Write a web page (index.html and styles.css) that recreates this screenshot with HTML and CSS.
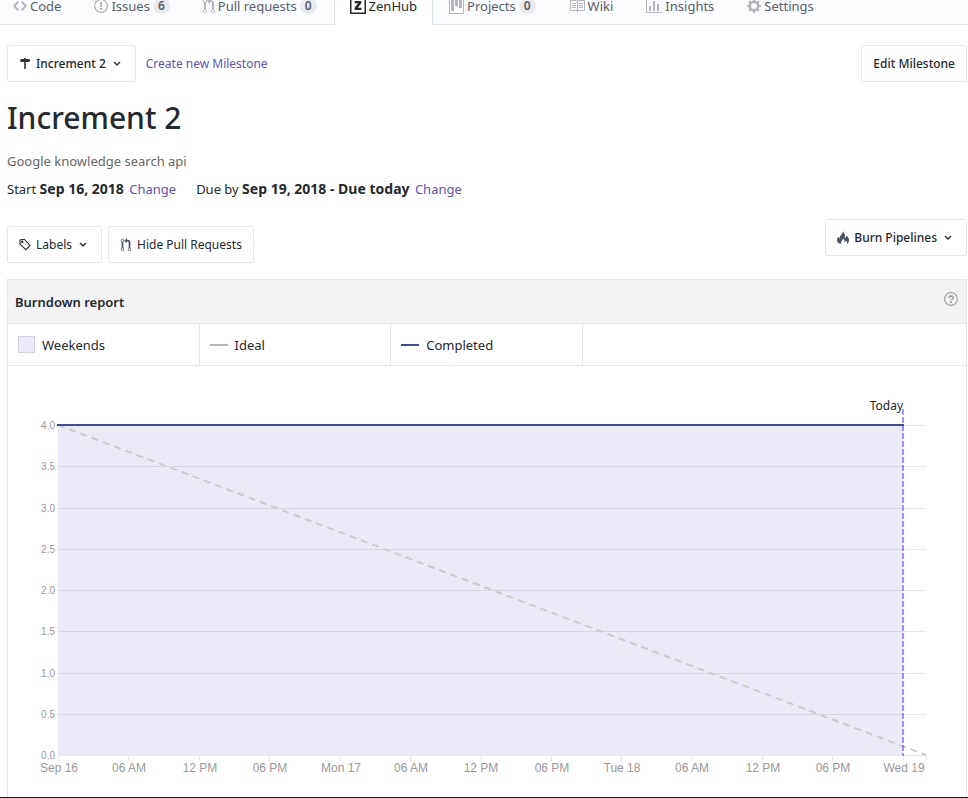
FILE: index.html
```html
<!DOCTYPE html>
<html lang="en">
<head>
<meta charset="utf-8">
<meta name="viewport" content="width=device-width, initial-scale=1">
<title>Increment 2</title>
<link rel="stylesheet" href="styles.css">
</head>
<body>
<nav class="tabs" aria-label="Repository">
  <a class="tab" href="#code"><svg class="icon" width="14" height="16" viewBox="0 0 14 16"><path d="M9.5 3L8 4.500 11.500 8 8 11.500 9.500 13 14 8 9.500 3zm-5 0L0 8l4.500 5L6 11.500 2.500 8 6 4.500 4.500 3z"/></svg>Code</a>
  <a class="tab" href="#issues"><svg class="icon" width="14" height="16" viewBox="0 0 14 16"><path d="M7 2.300c3.140 0 5.700 2.560 5.700 5.700s-2.560 5.700-5.700 5.700A5.710 5.710 0 0 1 1.300 8c0-3.140 2.560-5.700 5.700-5.700zM7 1C3.140 1 0 4.140 0 8s3.140 7 7 7 7-3.140 7-7-3.140-7-7-7zm1 3H6v5h2V4zm0 6H6v2h2v-2z"/></svg>Issues <span class="count">6</span></a>
  <a class="tab" href="#pulls"><svg class="icon" width="12" height="16" viewBox="0 0 12 16"><path d="M11 11.280V5c-.03-.78-.34-1.470-.94-2.060C9.460 2.350 8.780 2.030 8 2H7V0L4 3l3 3V4h1c.27.020.480.110.690.310.210.200.300.420.310.690v6.280A1.993 1.993 0 0 0 10 15a1.993 1.993 0 0 0 1-3.720zm-1 2.920c-.66 0-1.200-.55-1.200-1.200 0-.65.550-1.200 1.200-1.200.650 0 1.200.550 1.200 1.200 0 .650-.550 1.200-1.200 1.200zM4 3c0-1.110-.890-2-2-2a1.993 1.993 0 0 0-1 3.720v6.560A1.993 1.993 0 0 0 2 15a1.993 1.993 0 0 0 1-3.720V4.720c.590-.340 1-.980 1-1.720zm-.8 10c0 .660-.550 1.200-1.200 1.200-.650 0-1.200-.550-1.200-1.200 0-.650.550-1.200 1.200-1.200.650 0 1.200.550 1.200 1.200zM2 4.200C1.340 4.200.8 3.650.8 3c0-.65.550-1.200 1.200-1.200.650 0 1.200.550 1.200 1.200 0 .650-.550 1.200-1.200 1.200z"/></svg>Pull requests <span class="count">0</span></a>
  <a class="tab tab-active" href="#zenhub" aria-current="page"><svg class="icon" width="16" height="16" viewBox="0 0 16 16"><path d="M0 0h16v16H0zM1.500 1.500v13h13v-13z" fill-rule="evenodd"/><path d="M4.700 3h6.600v2.200L7.800 9.700h3.600V12H4.600V9.800l3.500-4.500H4.700z"/></svg>ZenHub</a>
  <a class="tab" href="#projects"><svg class="icon" width="15" height="16" viewBox="0 0 15 16"><path fill-rule="evenodd" d="M10 10h3V2h-3v8zm-4-2h3V2H6v6zm-4 5h3V2H2v11zm-1 2h13V1H1v14zM14 0H1a1 1 0 0 0-1 1v14a1 1 0 0 0 1 1h13a1 1 0 0 0 1-1V1a1 1 0 0 0-1-1z"/></svg>Projects <span class="count">0</span></a>
  <a class="tab" href="#wiki"><svg class="icon" width="16" height="16" viewBox="0 0 16 16"><path fill-rule="evenodd" d="M3 5h4v1H3V5zm0 3h4V7H3v1zm0 2h4V9H3v1zm11-5h-4v1h4V5zm0 2h-4v1h4V7zm0 2h-4v1h4V9zm2-6v9c0 .550-.450 1-1 1H9.500l-1 1-1-1H2c-.550 0-1-.450-1-1V3c0-.550.450-1 1-1h5.500l1 1 1-1H15c.550 0 1 .450 1 1zm-8 .5L7.500 3H2v9h6V3.500zm7-.5H9.500l-.5.500V12h6V3z"/></svg>Wiki</a>
  <a class="tab" href="#insights"><svg class="icon" width="16" height="16" viewBox="0 0 16 16"><path d="M16 14v1H0V0h1v14h15zM5 13H3V8h2v5zm4 0H7V3h2v10zm4 0h-2V6h2v7z"/></svg>Insights</a>
  <a class="tab" href="#settings"><svg class="icon" width="14" height="16" viewBox="0 0 14 16"><path fill-rule="evenodd" d="M14 8.770v-1.600l-1.940-.640-.450-1.090.880-1.840-1.130-1.130-1.810.910-1.090-.450-.690-1.920h-1.600l-.630 1.940-1.110.450-1.840-.880-1.130 1.130.910 1.810-.450 1.090L0 7.230v1.590l1.940.640.450 1.090-.880 1.840 1.130 1.130 1.810-.910 1.090.450.690 1.920h1.590l.630-1.940 1.110-.450 1.840.880 1.130-1.130-.920-1.810.470-1.090L14 8.750v.020zM7 11c-1.660 0-3-1.340-3-3s1.340-3 3-3 3 1.340 3 3-1.340 3-3 3z"/></svg>Settings</a>
</nav>

<main class="page">
  <div class="bar">
    <button class="btn btn-strong" type="button"><svg class="btn-icon" width="12" height="14" viewBox="0 0 12 14"><path d="M5.200 1h1.600v1H10l1.500 1.300L10 5H6.800v7H5.200V5H2L.8 3.500 2 2h3.200z"/></svg>Increment 2<svg class="chevron" width="8" height="6" viewBox="0 0 8 6"><path d="M1 1l3 3 3-3"/></svg></button>
    <a class="link action" href="#new">Create new Milestone</a>
    <button class="btn btn-strong push" type="button">Edit Milestone</button>
  </div>

  <h1 class="title">Increment 2</h1>
  <p class="summary">Google knowledge search api</p>
  <div class="dates">
    <span>Start <b>Sep 16, 2018</b> <a class="link change" href="#start">Change</a></span>
    <span>Due by <b>Sep 19, 2018 - Due today</b> <a class="link change" href="#due">Change</a></span>
  </div>

  <div class="filters">
    <div class="group">
      <button class="btn" type="button"><svg class="btn-icon outline" width="12" height="14" viewBox="0 0 13 14"><path d="M1 2.500Q1 1 2.500 1H6l6 6.500L7.500 12 1 6z"/><circle cx="3.500" cy="3.500" r=".7"/></svg>Labels<svg class="chevron" width="8" height="6" viewBox="0 0 8 6"><path d="M1 1l3 3 3-3"/></svg></button>
      <button class="btn" type="button"><svg class="btn-icon slate" width="12" height="14" viewBox="0 0 12 16"><path d="M11 11.280V5c-.03-.78-.34-1.470-.94-2.060C9.460 2.350 8.780 2.030 8 2H7V0L4 3l3 3V4h1c.27.020.480.110.690.310.210.200.300.420.310.690v6.280A1.993 1.993 0 0 0 10 15a1.993 1.993 0 0 0 1-3.720zm-1 2.920c-.66 0-1.200-.55-1.200-1.200 0-.65.550-1.200 1.200-1.200.650 0 1.200.550 1.200 1.200 0 .650-.550 1.200-1.200 1.200zM4 3c0-1.110-.890-2-2-2a1.993 1.993 0 0 0-1 3.720v6.560A1.993 1.993 0 0 0 2 15a1.993 1.993 0 0 0 1-3.720V4.720c.590-.340 1-.980 1-1.720zm-.8 10c0 .660-.550 1.200-1.200 1.200-.650 0-1.200-.550-1.200-1.200 0-.650.550-1.200 1.200-1.200.650 0 1.200.550 1.200 1.200zM2 4.200C1.340 4.200.8 3.650.8 3c0-.65.550-1.200 1.200-1.200.650 0 1.200.550 1.200 1.200 0 .650-.550 1.200-1.200 1.200z"/></svg>Hide Pull Requests</button>
    </div>
    <button class="btn btn-strong" type="button"><svg class="btn-icon slate" width="12" height="14" viewBox="0 0 12 14"><path d="M6 0c.4 2 2 3 2 5 0 1-.3 1.600-.6 2.100C9 6.800 9.500 5.500 9.600 4.500 11.200 6 12 7.500 12 9.200c0 1.800-.8 3-2 3.800.4-1.500-.1-2.600-1.200-3.500-.2 1-.7 1.500-1.300 1.700.3-1.700-.4-3-1.500-3.700.1 1.500-2 2.500-2 4 0 .6.1 1 .4 1.500C1.500 12.800 0 11.500 0 9.300c0-1.500.7-2.600 1.700-3.600 0 1 .2 1.700.8 2.100C2.400 4.500 5.700 3.500 6 0z"/></svg>Burn Pipelines<svg class="chevron" width="8" height="6" viewBox="0 0 8 6"><path d="M1 1l3 3 3-3"/></svg></button>
  </div>

  <section class="report" aria-labelledby="report-title">
    <header class="report-head">
      <h2 id="report-title" class="report-title">Burndown report</h2>
      <button class="help" type="button" aria-label="Help"><svg width="14" height="16" viewBox="0 0 14 16"><path d="M6 10h2v2H6v-2zm4-3.500C10 8.640 8 9 8 9H6c0-.550.450-1 1-1h.5c.280 0 .5-.220.500-.5v-1c0-.280-.220-.5-.5-.5h-1c-.280 0-.5.220-.5.500V7H4c0-1.500 1.500-3 3-3s3 1 3 2.500zM7 2.300c3.140 0 5.700 2.560 5.700 5.700s-2.560 5.700-5.700 5.700A5.710 5.710 0 0 1 1.300 8c0-3.140 2.560-5.700 5.700-5.700zM7 1C3.140 1 0 4.140 0 8s3.140 7 7 7 7-3.140 7-7-3.140-7-7-7z"/></svg></button>
    </header>
    <ul class="legend">
      <li><span class="swatch"></span>Weekends</li>
      <li><span class="stroke stroke-ideal"></span>Ideal</li>
      <li><span class="stroke stroke-done"></span>Completed</li>
    </ul>
    <svg class="chart" viewBox="0 0 958 431" role="img" aria-label="Burndown chart">
      <path class="grid" d="M50 59.500H918M50 100.500H918M50 142.500H918M50 183.500H918M50 224.500H918M50 265.500H918M50 307.500H918M50 348.500H918M50 389.500H918"/>
      <path class="grid" d="M50.500 389v6M120.500 389v6M191.500 389v6M261.500 389v6M332.500 389v6M402.500 389v6M473.500 389v6M543.500 389v6M613.500 389v6M684.500 389v6M754.500 389v6M824.500 389v6M895.500 389v6M918.500 389v5"/>
      <rect class="weekend" x="50" y="60" width="845" height="329"/>
      <path class="ideal" d="M50 59L918 389"/>
      <path class="done" d="M49 59H896"/>
      <path class="today" d="M895 43V390"/>
      <text class="today-label" x="895" y="44">Today</text>
      <g class="y-axis">
        <text x="47" y="63">4.0</text><text x="47" y="104">3.5</text><text x="47" y="146">3.0</text><text x="47" y="187">2.5</text><text x="47" y="228">2.0</text><text x="47" y="269">1.5</text><text x="47" y="311">1.0</text><text x="47" y="352">0.5</text><text x="47" y="393">0.0</text>
      </g>
      <g class="x-axis">
        <text x="51" y="406">Sep 16</text><text x="121" y="406">06 AM</text><text x="192" y="406">12 PM</text><text x="262" y="406">06 PM</text><text x="333" y="406">Mon 17</text><text x="403" y="406">06 AM</text><text x="473" y="406">12 PM</text><text x="544" y="406">06 PM</text><text x="614" y="406">Tue 18</text><text x="684" y="406">06 AM</text><text x="755" y="406">12 PM</text><text x="825" y="406">06 PM</text><text x="896" y="406">Wed 19</text>
      </g>
    </svg>
  </section>
</main>
</body>
</html>
```
FILE: styles.css
```css
* { box-sizing: border-box; }

body {
  margin: 0;
  background: #fff;
  color: #24292e;
  font: 13px/20px "Noto Sans", "Open Sans", sans-serif;
  border-bottom: 1px solid #111;
  overflow-x: hidden;
}

a { color: inherit; text-decoration: none; }

.tabs {
  display: flex;
  height: 25px;
  align-items: flex-end;
  overflow: hidden;
  background: #fafbfc;
  box-shadow: inset 0 -1px #e1e4e8;
}

.tab {
  display: flex;
  flex: none;
  align-items: center;
  gap: 3px;
  height: 38px;
  padding: 4px 16px;
  margin-right: 1px;
  color: #586069;
  white-space: nowrap;
}
.tab:first-child { padding-left: 13px; }

.tab-active {
  margin: 0;
  padding: 4px 15px;
  background: #fff;
  border: solid #e1e4e8;
  border-width: 0 1px;
  color: #24292e;
}

.icon { flex: none; fill: #b4b6b9; }
.tab-active .icon { fill: #24292e; }

.count {
  padding: 0 5px;
  border-radius: 10px;
  background: #e9eaec;
  font-size: 12px;
  line-height: 16px;
  font-weight: 600;
}

.page { padding: 20px 1px 0 7px; }

.bar { display: flex; align-items: center; gap: 10px; }
.push { margin-left: auto; }

.btn, .action { font: 12px/20px "Noto Sans", "Open Sans", sans-serif; }
.btn {
  display: inline-flex;
  align-items: center;
  height: 37px;
  padding: 0 11px;
  border: 1px solid #e8e8e8;
  border-radius: 2px;
  background: #fff;
  color: #24292e;
  white-space: nowrap;
}
.btn-strong { font-weight: 500; }
.btn-icon { margin-right: 5px; fill: #333; }
.slate { fill: #4a5264; }
.outline { fill: none; stroke: #24292e; stroke-width: 1.2; }
.chevron { margin: 0 3px 0 7px; fill: none; stroke: #333; stroke-width: 1.5; }

.link { color: #5e53b5; }

.title {
  margin: 16px 0 0;
  font-size: 30px;
  line-height: 40px;
  font-weight: 500;
}
.summary { margin: 13px 0 0; color: #666; }
.dates { display: flex; gap: 20px; margin-top: 8px; }
.dates b { font-size: 14px; }
.change { margin-left: 2px; }

.filters {
  display: flex;
  align-items: flex-start;
  justify-content: space-between;
  margin-top: 20px;
}
.group { display: flex; gap: 6px; padding-top: 7px; }

.report {
  margin-top: 16px;
  border: 1px solid #e8e8e8;
  border-bottom: 0;
}
.report-head {
  display: flex;
  align-items: center;
  justify-content: space-between;
  height: 44px;
  padding: 0 8px 0 7px;
  background: #f3f3f3;
  border-bottom: 1px solid #e8e8e8;
}
.report-title { margin: 0; font-size: 13px; font-weight: 600; }
.help { display: flex; padding: 0 0 6px; border: 0; background: none; }
.help svg { fill: #a8a8a8; }

.legend {
  display: flex;
  margin: 0;
  padding: 0;
  list-style: none;
  border-bottom: 1px solid #e8e8e8;
}
.legend li {
  display: flex;
  flex: 0 0 20%;
  align-items: center;
  gap: 7px;
  height: 41px;
  padding-left: 10px;
  border-right: 1px solid #e8e8e8;
}
.swatch { width: 17px; height: 17px; border: 1px solid #d3d3df; background: #eaebf7; }
.stroke { width: 18px; height: 2px; background: #b8b8b8; }
.stroke-done { background: #3f4a94; }

.chart { display: block; width: 100%; }
.grid { stroke: #e8e8e8; shape-rendering: crispEdges; }
.weekend { fill: #3c3caf; fill-opacity: .1; }
.ideal { fill: none; stroke: #ccc; stroke-width: 2; stroke-dasharray: 7 5; }
.done { stroke: #3f4a9c; stroke-width: 2; }
.today { stroke: #5a28ff; stroke-opacity: .5; stroke-width: 2; stroke-dasharray: 6 2; }
.today-label { font-size: 12px; text-anchor: end; fill: #24292e; }
.y-axis { font: 10px "Liberation Sans", Arial, sans-serif; text-anchor: end; fill: #999; }
.x-axis { font: 12px "Liberation Sans", Arial, sans-serif; text-anchor: middle; fill: #999; }
```
